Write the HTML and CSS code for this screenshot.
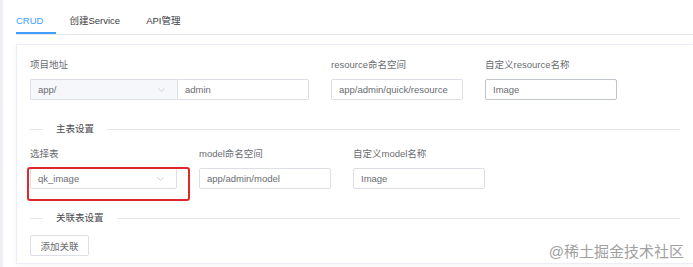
FILE: index.html
```html
<!DOCTYPE html>
<html>
<head>
    <title>CRUD</title>
    <link rel="stylesheet" href="styles.css">
</head>
<body>
    <div class="page">
        <div class="tabs">
            <div class="tab active">CRUD</div>
            <div class="tab">创建Service</div>
            <div class="tab">API管理</div>
        </div>
        <div class="card">
            <div class="form-row">
                <div class="form-item">
                    <div class="label">项目地址</div>
                    <div class="input-group">
                        <div class="select prepend">
                            <span>app/</span>
                            <svg class="arrow" width="7" height="4" viewBox="0 0 7 4"><path d="M0.5 0.5 L3.5 3.3 L6.5 0.5" fill="none" stroke="#c0c4cc" stroke-width="0.8"/></svg>
                        </div>
                        <div class="input joined">admin</div>
                    </div>
                </div>
                <div class="form-item">
                    <div class="label">resource命名空间</div>
                    <div class="input">app/admin/quick/resource</div>
                </div>
                <div class="form-item">
                    <div class="label">自定义resource名称</div>
                    <div class="input hover">Image</div>
                </div>
            </div>

            <div class="divider"><span>主表设置</span></div>

            <div class="form-row">
                <div class="form-item marked">
                    <div class="label">选择表</div>
                    <div class="select">
                        <span>qk_image</span>
                        <svg class="arrow" width="7" height="4" viewBox="0 0 7 4"><path d="M0.5 0.5 L3.5 3.3 L6.5 0.5" fill="none" stroke="#c0c4cc" stroke-width="0.8"/></svg>
                    </div>
                    <div class="mark"></div>
                </div>
                <div class="form-item">
                    <div class="label">model命名空间</div>
                    <div class="input">app/admin/model</div>
                </div>
                <div class="form-item">
                    <div class="label">自定义model名称</div>
                    <div class="input">Image</div>
                </div>
            </div>

            <div class="divider"><span>关联表设置</span></div>

            <button class="btn">添加关联</button>
        </div>
        <div class="watermark">@稀土掘金技术社区</div>
    </div>
</body>
</html>
```

FILE: styles.css
```css
body {
    margin: 0;
    padding: 0;
    font-family: "Liberation Sans", "Noto Sans CJK SC", sans-serif;
    font-size: 9.5px;
    color: #6a6c70;
    background-color: #eef0f3;
}
.page {
    position: relative;
    margin-left: 3px;
    height: 267px;
    overflow: hidden;
    background-color: #fff;
    padding-left: 13px;
    padding-top: 8px;
}

/* tabs */
.tabs {
    display: flex;
    height: 26px;
    border-bottom: 1px solid #e4e7ed;
}
.tab {
    line-height: 26px;
    padding: 0 13px;
    color: #3a3b3e;
}
.tab:first-child {
    padding-left: 0;
}
.tab.active {
    color: #409eff;
    box-shadow: inset 0 -2px 0 #409eff;
}

/* card */
.card {
    margin-top: 9px;
    border: 1px solid #ebeef5;
    border-right: none;
    box-shadow: 0 1px 6px rgba(0, 0, 0, 0.04);
    padding: 12px 13px 10px 13px;
    height: 196px;
}

.form-row {
    display: flex;
    gap: 22px;
}
.form-item {
    margin-bottom: 13px;
}
.form-item.marked {
    position: relative;
}
.label {
    line-height: 16px;
    padding-bottom: 6px;
    color: #6a6c70;
}

.input, .select {
    box-sizing: border-box;
    height: 21px;
    line-height: 19px;
    border: 1px solid #dcdfe6;
    border-radius: 2px;
    padding: 0 7px;
    color: #6a6c70;
    background-color: #fff;
}
.input {
    width: 132px;
}
.input.hover {
    border-color: #c0c4cc;
}
.select {
    width: 147px;
    display: flex;
    align-items: center;
    justify-content: space-between;
}
.select .arrow {
    margin-right: 5px;
}
.input-group {
    display: flex;
}
.select.prepend {
    background-color: #f5f7fa;
    border-right: none;
    border-radius: 2px 0 0 2px;
}
.input.joined {
    border-radius: 0 2px 2px 0;
}

/* red annotation box */
.mark {
    position: absolute;
    left: -3px;
    top: 21px;
    width: 163px;
    height: 34px;
    box-sizing: border-box;
    border: 2px solid #e0282b;
    border-radius: 3px;
}

.divider {
    position: relative;
    height: 1px;
    background-color: #e4e7ed;
    margin: 16px 0;
}
.divider span {
    position: absolute;
    left: 13px;
    top: -8px;
    line-height: 16px;
    padding: 0 13px;
    background-color: #fff;
    color: #4a4b4f;
}

.btn {
    font-family: inherit;
    font-size: 9.5px;
    color: #6a6c70;
    background-color: #fff;
    border: 1px solid #dcdfe6;
    border-radius: 2px;
    width: 59px;
    height: 21px;
    padding: 0;
}

.watermark {
    position: absolute;
    right: 9px;
    bottom: 14px;
    font-size: 15px;
    color: #a0a0a0;
    text-shadow: 0 0 1px #fff;
}
```
